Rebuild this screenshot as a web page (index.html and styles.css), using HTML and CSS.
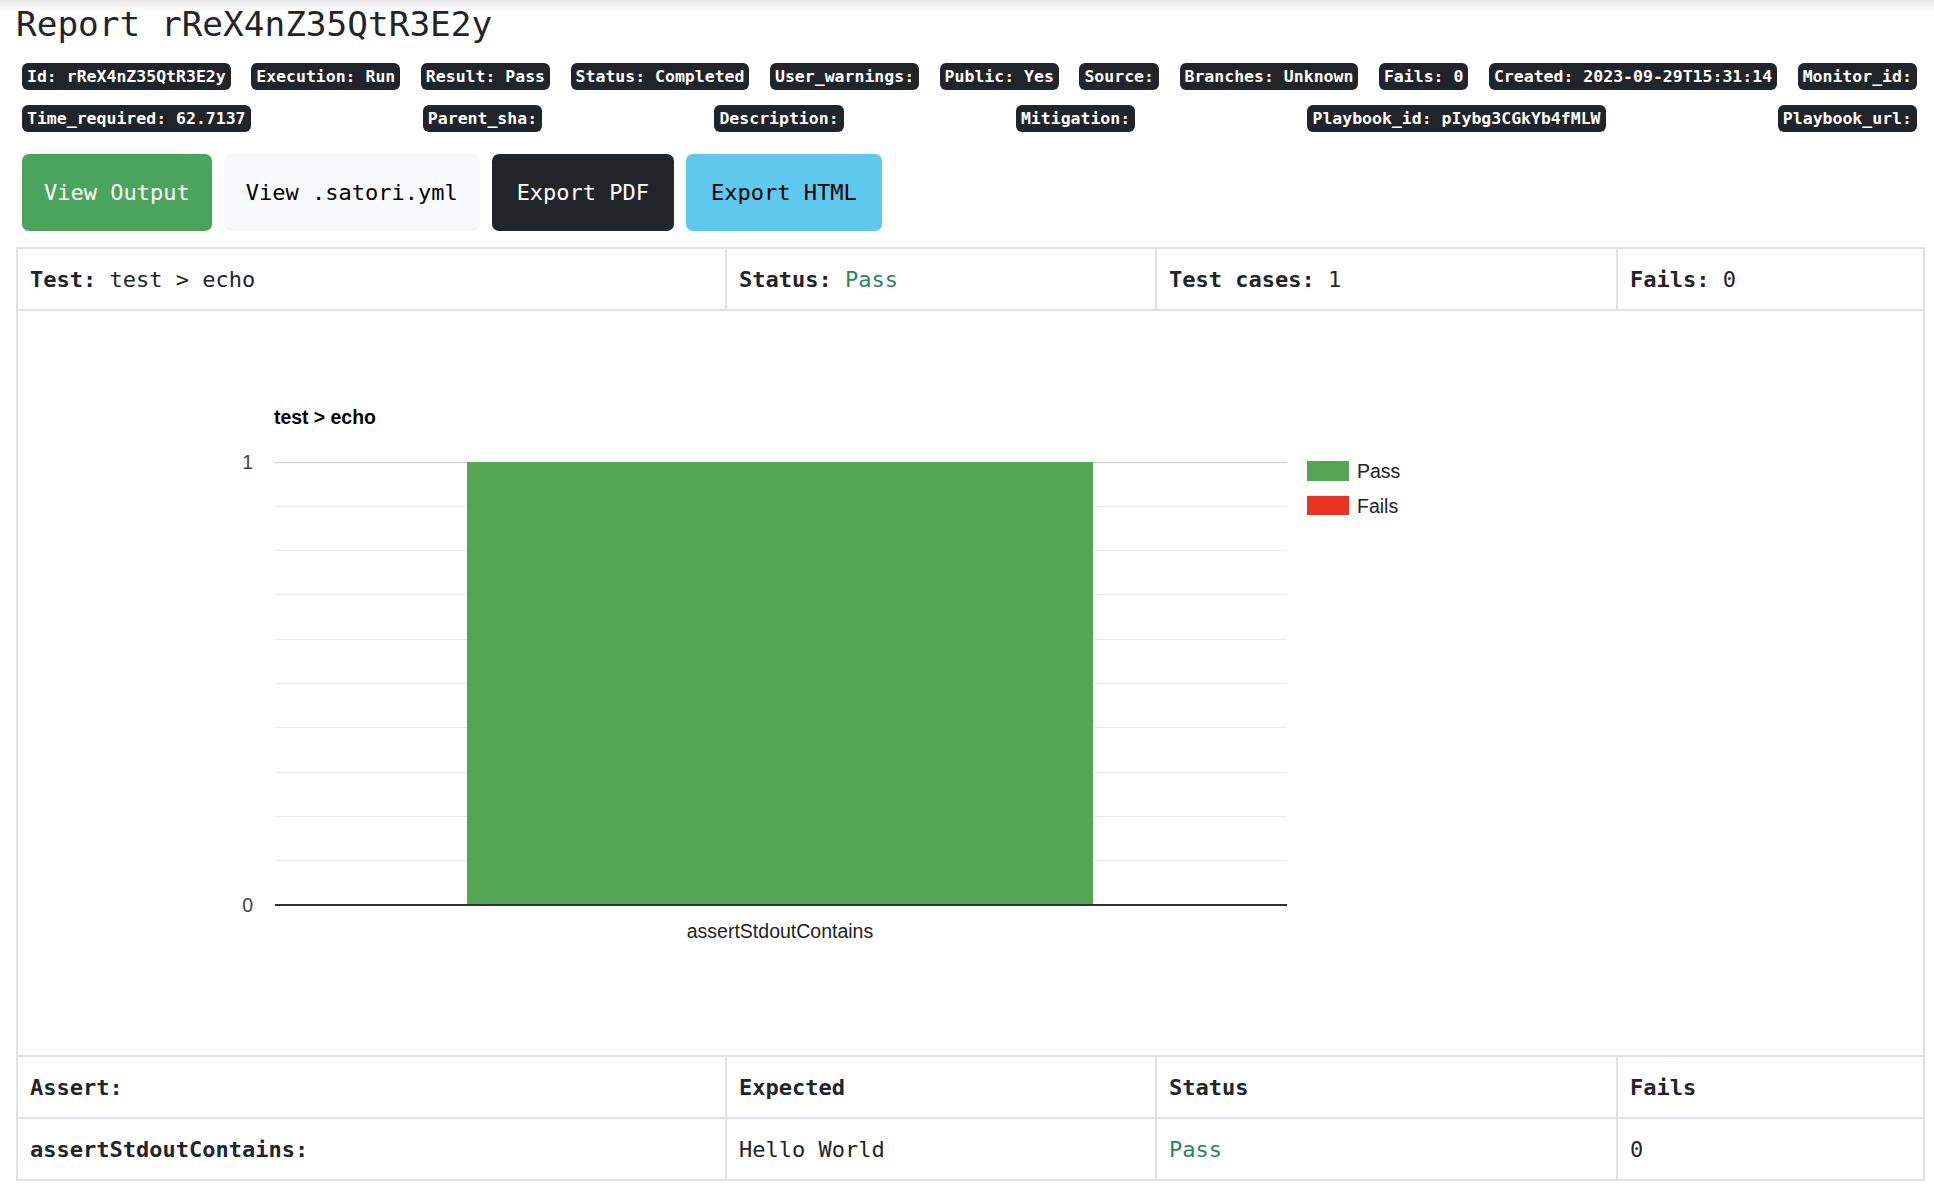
FILE: index.html
```html
<!DOCTYPE html>
<html lang="en">
<head>
<meta charset="utf-8">
<title>Report rReX4nZ35QtR3E2y</title>
<link rel="stylesheet" href="styles.css">
</head>
<body>
<div class="page">
  <h1 class="title">Report rReX4nZ35QtR3E2y</h1>
  <div class="badges">
    <span class="badge">Id: rReX4nZ35QtR3E2y</span>
    <span class="badge">Execution: Run</span>
    <span class="badge">Result: Pass</span>
    <span class="badge">Status: Completed</span>
    <span class="badge">User_warnings:</span>
    <span class="badge">Public: Yes</span>
    <span class="badge">Source:</span>
    <span class="badge">Branches: Unknown</span>
    <span class="badge">Fails: 0</span>
    <span class="badge">Created: 2023-09-29T15:31:14</span>
    <span class="badge">Monitor_id:</span>
    <span class="badge">Time_required: 62.7137</span>
    <span class="badge">Parent_sha:</span>
    <span class="badge">Description:</span>
    <span class="badge">Mitigation:</span>
    <span class="badge">Playbook_id: pIybg3CGkYb4fMLW</span>
    <span class="badge">Playbook_url:</span>
  </div>
  <div class="buttons">
    <a class="btn btn-success">View Output</a>
    <a class="btn btn-light">View .satori.yml</a>
    <a class="btn btn-dark btn-wide">Export PDF</a>
    <a class="btn btn-info btn-wide">Export HTML</a>
  </div>
  <table class="report">
    <colgroup>
      <col class="c1"><col class="c2"><col class="c3"><col class="c4">
    </colgroup>
    <tr class="row">
      <td><b>Test:</b> test &gt; echo</td>
      <td><b>Status:</b> <span class="pass">Pass</span></td>
      <td><b>Test cases:</b> 1</td>
      <td><b>Fails:</b> 0</td>
    </tr>
    <tr class="chart-row">
      <td colspan="4" class="chart-cell">
        <svg class="chart" width="1905" height="744" viewBox="0 0 1905 744" xmlns="http://www.w3.org/2000/svg">
          <text x="256" y="113" font-family="Liberation Sans, Arial, sans-serif" font-size="19.4" font-weight="bold" fill="#000">test &gt; echo</text>
          <g stroke="#ebebeb" stroke-width="1">
            <line x1="257" x2="1269" y1="195.5" y2="195.5"/>
            <line x1="257" x2="1269" y1="239.5" y2="239.5"/>
            <line x1="257" x2="1269" y1="283.5" y2="283.5"/>
            <line x1="257" x2="1269" y1="328.5" y2="328.5"/>
            <line x1="257" x2="1269" y1="372.5" y2="372.5"/>
            <line x1="257" x2="1269" y1="416.5" y2="416.5"/>
            <line x1="257" x2="1269" y1="461.5" y2="461.5"/>
            <line x1="257" x2="1269" y1="505.5" y2="505.5"/>
            <line x1="257" x2="1269" y1="549.5" y2="549.5"/>
          </g>
          <line x1="257" x2="1269" y1="151.5" y2="151.5" stroke="#cccccc" stroke-width="1"/>
          <rect x="449" y="151" width="626" height="443" fill="#53a653"/>
          <line x1="257" x2="1269" y1="594" y2="594" stroke="#333333" stroke-width="2"/>
          <g font-family="Liberation Sans, Arial, sans-serif" font-size="19.5" fill="#444">
            <text x="235" y="158" text-anchor="end">1</text>
            <text x="235" y="601" text-anchor="end">0</text>
            <text x="762" y="627" text-anchor="middle" fill="#222">assertStdoutContains</text>
          </g>
          <rect x="1289" y="150" width="42" height="20" fill="#53a653"/>
          <rect x="1289" y="185" width="42" height="19" fill="#ea3323"/>
          <g font-family="Liberation Sans, Arial, sans-serif" font-size="19.5" fill="#222">
            <text x="1339" y="167">Pass</text>
            <text x="1339" y="202">Fails</text>
          </g>
        </svg>
      </td>
    </tr>
    <tr class="row">
      <td><b>Assert:</b></td>
      <td><b>Expected</b></td>
      <td><b>Status</b></td>
      <td><b>Fails</b></td>
    </tr>
    <tr class="row row-last">
      <td><b>assertStdoutContains:</b></td>
      <td>Hello World</td>
      <td><span class="pass">Pass</span></td>
      <td>0</td>
    </tr>
  </table>
</div>
</body>
</html>
```
FILE: styles.css
```css
html, body {
  margin: 0;
  padding: 0;
}
body {
  background: linear-gradient(to bottom, #e9e9e9 0px, #ffffff 12px) no-repeat, #ffffff;
  color: #212529;
  font-family: "DejaVu Sans Mono", "Liberation Mono", monospace;
}
.page {
  padding: 0 11px 0 16px;
}
.title {
  margin: 0;
  padding-top: 4px;
  font-size: 34.4px;
  line-height: 40px;
  font-weight: normal;
  color: #212529;
}
.badges {
  display: flex;
  flex-wrap: wrap;
  justify-content: space-between;
  row-gap: 15px;
  column-gap: 8px;
  margin: 19px 6px 0 6px;
}
.badge {
  display: inline-block;
  background: #212529;
  color: #fff;
  font-weight: bold;
  font-size: 16.5px;
  height: 27px;
  line-height: 27px;
  padding: 0 5px;
  border-radius: 6px;
  white-space: nowrap;
}
.buttons {
  display: flex;
  gap: 12px;
  margin: 22px 6px 0 6px;
}
.btn {
  display: inline-flex;
  align-items: center;
  height: 77px;
  padding: 0 22px;
  font-size: 22px;
  border-radius: 7px;
  box-sizing: border-box;
  text-decoration: none;
  white-space: nowrap;
}
.btn-wide { padding: 0 25px; }
.btn-success { background: #4ba45b; color: #fff; }
.btn-light { background: #f8f9fa; color: #000; }
.btn-dark { background: #212529; color: #fff; }
.btn-info { background: #5ec8ed; color: #000; }

.report {
  margin-top: 16px;
  width: 100%;
  border-collapse: collapse;
  table-layout: fixed;
  font-size: 22px;
  color: #212529;
}
.c1 { width: 709px; }
.c2 { width: 430px; }
.c3 { width: 461px; }
.c4 { width: 307px; }
.report td {
  border: 2px solid #dee2e6;
  padding: 0 12px;
  vertical-align: middle;
  white-space: nowrap;
}
.row { height: 62px; }
.row-last { height: 62px; }
.chart-row { height: 746px; }
.report td.chart-cell {
  padding: 0;
  vertical-align: top;
}
.chart {
  display: block;
}
.pass { color: #24875a; }
```
